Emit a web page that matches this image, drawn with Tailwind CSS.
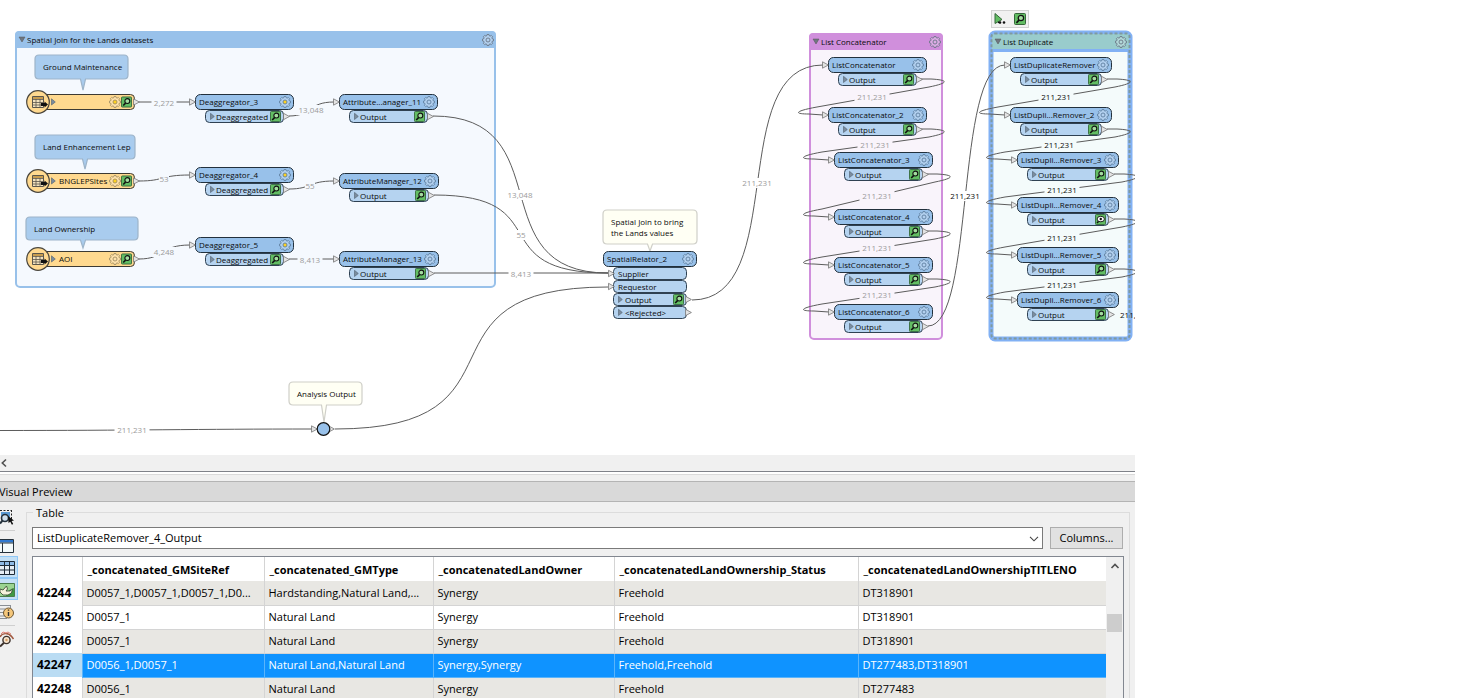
<!DOCTYPE html>
<html lang="en">
<head>
<meta charset="utf-8">
<title>Workspace – Visual Preview</title>
<script src="https://cdn.jsdelivr.net/npm/@tailwindcss/browser@4"></script>
</head>
<body class="bg-white text-black font-['Open_Sans','Noto_Sans',sans-serif]">
<div class="flex h-screen w-full max-w-[1135px] flex-col overflow-hidden">

  <!-- Workflow canvas -->
  <main class="h-[455px] shrink-0 overflow-hidden">
    <svg id="canvas" class="block h-[455px] w-[1135px]" viewBox="0 0 1135 455" role="img" aria-label="Workflow canvas">
      <defs>
        <symbol id="gear" viewBox="-7 -7 14 14">
          <path d="M-1.1-5.8h2.2l.4 1.5 1.1.5 1.4-.9 1.6 1.6-.9 1.4.5 1.1 1.5.4v2.2l-1.5.4-.5 1.1.9 1.4-1.6 1.6-1.4-.9-1.1.5-.4 1.5h-2.2l-.4-1.5-1.1-.5-1.4.9-1.6-1.6.9-1.4-.5-1.1-1.5-.4v-2.2l1.5-.4.5-1.1-.9-1.4 1.6-1.6 1.4.9 1.1-.5z" transform="scale(.82) translate(0 -.9)" fill="#ffffff" fill-opacity=".25" stroke="currentColor" stroke-width="1.100"/>
          <circle r="2" fill="var(--hub,none)" stroke="currentColor" stroke-width=".9"/>
        </symbol>
        <symbol id="mag" viewBox="0 0 12 12">
          <rect x=".5" y=".5" width="11" height="11" rx="1" fill="#62bd63" stroke="#35663a"/>
          <path d="M5 7.2 2.4 9.8" stroke="#111" stroke-width="1.7"/>
          <circle cx="6.9" cy="5" r="2.7" fill="#a4dda0" stroke="#111" stroke-width="1.2"/>
        </symbol>
        <symbol id="eye" viewBox="0 0 12 12">
          <rect x=".5" y=".5" width="11" height="11" rx="1" fill="#62bd63" stroke="#35663a"/>
          <path d="M4 7.8 2.2 9.8" stroke="#111" stroke-width="1.6"/>
          <ellipse cx="6.3" cy="5.5" rx="4" ry="3" fill="#fff" stroke="#111"/>
          <circle cx="6.3" cy="5.5" r="1.3" fill="#111"/>
        </symbol>
        <symbol id="tri" viewBox="0 0 7 8"><path d="M.5.8v6.4L6.4 4z" fill="#e3e3e3" stroke="#777" stroke-width=".8"/></symbol>
        <symbol id="exp" viewBox="0 0 5 8"><path d="M.5.8v6.2L4.3 4z" fill="#7b8c9e" stroke="#4f5f70" stroke-width=".6"/></symbol>
      </defs>
    </svg>
  </main>

  <!-- Horizontal scroll bar -->
  <div class="flex h-[16px] shrink-0 items-center bg-[#f0f0f0]">
    <button type="button" aria-label="Scroll left" class="flex h-4 w-4 items-center"><svg viewBox="0 0 10 10" class="h-[10px] w-[10px]"><path d="M6 1.500 2.300 5 6 8.500" fill="none" stroke="#505050" stroke-width="1.600"/></svg></button>
  </div>
  <div class="h-[3px] shrink-0 border-t border-[#7f8289] bg-white"></div>
  <div class="h-[7px] shrink-0 border-t border-[#dadada] bg-[#f0f0f0]"></div>

  <!-- Visual preview -->
  <h2 class="flex h-[21px] shrink-0 items-center border-y border-[#b4b4b4] bg-[#d9d9d9] pt-[2px] text-[11px]"><span class="-ml-px">Visual Preview</span></h2>

  <section class="flex min-h-0 grow bg-[#f0f0f0]">
    <nav class="flex w-[26px] shrink-0 flex-col" aria-label="Preview tools">
      <button type="button" aria-label="Select and zoom" class="mt-[6px] h-[20px] w-[15px]">
        <svg viewBox="0 0 15 20" class="h-[20px] w-[15px]"><path d="M0 2.500h12M11.500 2v10" fill="none" stroke="#222" stroke-width="1" stroke-dasharray="2 1.500"/><path d="M1 4h9v8H1z" fill="#5b9bd5"/><circle cx="5" cy="10" r="3.500" fill="#cfe0ee" stroke="#24313c" stroke-width="1.600"/><path d="M2.500 12.500 0 15.500" stroke="#24313c" stroke-width="2"/><path d="m8 8 6 4.500-2.400.6 1.600 3-1.300.7-1.600-3L8.500 15z" fill="#111"/></svg>
      </button>
      <div class="mt-[2px] h-px w-[15px] bg-[#cfcfcf]"></div>
      <button type="button" aria-label="Side panel" class="mt-[7px] h-[17px] w-[15px]">
        <svg viewBox="0 0 15 17" class="h-[17px] w-[15px]"><path d="M-1 1.500h14.500v13H-1z" fill="#f4fafb" stroke="#26323c"/><path d="M0 2h13v2.500H0z" fill="#2f78d0"/><path d="M0 5h13M2.500 5v9" stroke="#26323c"/></svg>
      </button>
      <button type="button" aria-label="Table view" class="mt-[1px] h-[22px] w-[18px] border border-l-0 border-[#90c8f6] bg-[#c4e0f5]">
        <svg viewBox="0 0 17 20" class="h-[20px] w-[17px]"><path d="M-1 4.500h15.500v13H-1z" fill="#e6eef4" stroke="#1d2a36"/><path d="M0 5h14v3H0z" fill="#8ebbe6"/><path d="M0 8.500h14M0 13h14M4.500 5v12M9.500 5v12" stroke="#1d2a36"/></svg>
      </button>
      <button type="button" aria-label="Graphics view" class="h-[22px] w-[18px] border border-l-0 border-[#90c8f6] bg-[#c4e0f5]">
        <svg viewBox="0 0 17 20" class="h-[20px] w-[17px]"><path d="M-1 4.500h15.500v13H-1z" fill="#9bd592" stroke="#4a7d4a"/><path d="M6 17c0-4 4-7 8-8v8z" fill="#3f9a43"/><path d="M0 10l3 1 3.500-4 1 3-1.500 2h4l2.500-2-1 4-3.500 2H3L0 13z" fill="#f6f2dc" stroke="#40523a" stroke-width=".9"/></svg>
      </button>
      <button type="button" aria-label="Feature information" class="mt-[2px] h-[20px] w-[15px]">
        <svg viewBox="0 0 15 20" class="h-[20px] w-[15px]"><path d="M0 3.500h11M0 7h5M0 10.500h4M0 14h5M0 16.500h7M10.500 3v3" stroke="#8a8f94"/><circle cx="8.500" cy="11" r="5" fill="#f5c77b" stroke="#6b5633"/><path d="M8.500 10v4M8.500 7.500v1.300" stroke="#333" stroke-width="1.400"/></svg>
      </button>
      <div class="mt-[3px] h-px w-[15px] bg-[#cfcfcf]"></div>
      <button type="button" aria-label="Inspect" class="mt-[4px] h-[20px] w-[15px]">
        <svg viewBox="0 0 15 20" class="h-[20px] w-[15px]"><path d="M0 7c2-4 8-5 12 0l1.500 2" fill="none" stroke="#a0583f" stroke-width="1.500"/><path d="M1 4 3 2l3 1 2-1 3 2" fill="none" stroke="#e0857a"/><circle cx="6.500" cy="10" r="3.600" fill="#f6e3cc" stroke="#3d322c" stroke-width="1.400"/><circle cx="6.500" cy="10" r="1.200" fill="#d9a066"/><path d="M4 12.800 0 16.500" stroke="#3d322c" stroke-width="2"/></svg>
      </button>
    </nav>

    <fieldset class="relative mt-[10px] mr-[5px] flex min-w-0 grow flex-col border border-b-0 border-[#dcdcdc] px-[5px] pt-[14px]">
      <legend class="absolute -top-[10px] left-[6px] bg-[#f0f0f0] px-[3px] text-[11px] leading-[20px]">Table</legend>
      <div class="flex gap-[7px] pr-px">
        <div class="relative grow">
          <select aria-label="Table" class="block h-[22px] w-full appearance-none border border-[#7a7a7a] bg-white px-[4px] text-[11px] leading-[20px]"><option>ListDuplicateRemover_4_Output</option></select>
          <svg viewBox="0 0 10 6" class="pointer-events-none absolute top-[9px] right-[4px] h-[6px] w-[10px]"><path d="m1 .8 4 4 4-4" fill="none" stroke="#444" stroke-width="1.100"/></svg>
        </div>
        <button type="button" class="h-[22px] w-[73px] border border-[#adadad] bg-[#e1e1e1] text-[11px] leading-[20px]">Columns...</button>
      </div>
      <div class="mt-[7px] flex min-h-0 grow overflow-hidden border border-b-0 border-[#828790] bg-white">
        <div class="min-w-0 grow overflow-hidden">
        <table class="w-full table-fixed border-collapse text-left text-[11px] leading-[20px]">
          <colgroup><col class="w-[49px]"><col class="w-[182px]"><col class="w-[169px]"><col class="w-[181px]"><col class="w-[244px]"><col></colgroup>
          <thead>
            <tr class="h-[24px] font-bold">
              <th></th>
              <th class="border-l border-[#d4d4d4] px-[5px] pt-px">_concatenated_GMSiteRef</th>
              <th class="border-l border-[#d4d4d4] px-[5px] pt-px">_concatenated_GMType</th>
              <th class="border-l border-[#d4d4d4] px-[5px] pt-px">_concatenatedLandOwner</th>
              <th class="border-l border-[#d4d4d4] px-[5px] pt-px">_concatenatedLandOwnership_Status</th>
              <th class="border-l border-[#d4d4d4] px-[5px] pt-px">_concatenatedLandOwnershipTITLENO</th>
            </tr>
          </thead>
          <tbody id="rows"></tbody>
        </table>
        </div>
        <div class="flex w-[17px] shrink-0 flex-col items-center bg-[#f0f0f0]">
          <button type="button" aria-label="Scroll up" class="flex h-[18px] w-full items-center justify-center"><svg viewBox="0 0 10 6" class="h-[6px] w-[10px]"><path d="m1.500 5 3.500-3.500L8.500 5" fill="none" stroke="#505050" stroke-width="1.600"/></svg></button>
          <div class="mt-[39px] h-[18px] w-[15px] bg-[#cdcdcd]"></div>
        </div>
      </div>
    </fieldset>
  </section>
</div>

<script>
const rows = [
  ['42244','D0057_1,D0057_1,D0057_1,D0...','Hardstanding,Natural Land,...','Synergy','Freehold','DT318901'],
  ['42245','D0057_1','Natural Land','Synergy','Freehold','DT318901'],
  ['42246','D0057_1','Natural Land','Synergy','Freehold','DT318901'],
  ['42247','D0056_1,D0057_1','Natural Land,Natural Land','Synergy,Synergy','Freehold,Freehold','DT277483,DT318901'],
  ['42248','D0056_1','Natural Land','Synergy','Freehold','DT277483'],
];
document.getElementById('rows').innerHTML = rows.map((r, i) => {
  const sel = i === 3;
  const cell = sel ? 'bg-[#0f93ff] text-white border-[#5ab4fb]' : (i % 2 ? 'bg-white border-[#d4d4d4]' : 'bg-[#e8e7e3] border-[#d4d4d4]');
  return `<tr class="h-[24px]"><th class="px-[4px] text-[12px] font-bold ${sel ? 'bg-[#badcf3]' : 'bg-white'}">${r[0]}</th>` +
    r.slice(1).map(c => `<td class="truncate border-l border-b px-[4px] ${cell}">${c}</td>`).join('') + '</tr>';
}).join('');

const BLUE = '#98c1ea', PORT = '#b5d3f0', EDGE = '#5c5c5c';
const out = [];
const esc = s => s.replace(/</g, '&lt;').replace(/>/g, '&gt;');
const text = (x, y, s, size, fill = '#0b0b0b', anchor = 'start') =>
  out.push(`<text x="${x}" y="${y}" font-size="${size}" fill="${fill}" text-anchor="${anchor}">${esc(s)}</text>`);
const use = (id, x, y, w, h, extra = '') => out.push(`<use href="#${id}" x="${x}" y="${y}" width="${w}" height="${h}" ${extra}/>`);
const rect = (x, y, w, h, rx, fill, stroke, sw = 1) =>
  out.push(`<rect x="${x}" y="${y}" width="${w}" height="${h}" rx="${rx}" fill="${fill}" stroke="${stroke}" stroke-width="${sw}"/>`);
const line = d => out.push(`<path d="${d}" fill="none" stroke="${EDGE}" stroke-width="1"/>`);
const gear = (x, y, hub, color = '#5f7f9f') => use('gear', x - 7, y - 7, 14, 14, `style="color:${color};--hub:${hub || 'none'}"`);
const count = (x, y, s, bg, fill = '#9b9b9b') => {
  const w = s.length * 5;
  rect(x - w / 2, y - 5, w, 10, 0, bg, 'none');
  text(x, y + 3, s, 8, fill, 'middle');
};
function group(x, y, w, h, color, fill, title, head = 17) {
  rect(x + 1, y + 1, w - 2, h - 2, 4, fill, color, 2);
  out.push(`<path d="M${x} ${y + head}V${y + 4}q0-4 4-4h${w - 8}q4 0 4 4v${head - 4}z" fill="${color}"/>`);
  out.push(`<path d="M${x + 4} ${y + 6}h6l-3 5z" fill="#6f7680" stroke="#555" stroke-width=".5"/>`);
  text(x + 12, y + 12, title, 8);
  gear(x + w - 8, y + 9, null, '#6a7686');
}
function port(x, y, w, name, icon, arrow = true, h = 12) {
  rect(x + .5, y + .5, w, h, 4, PORT, '#2f4152');
  use('exp', x + 5, y + 2.5, 5, 8);
  text(x + 11, y + 9.5, name, 8);
  if (icon) use(icon, x + w - 13, y + 1, 11, 11);
  if (arrow) use('tri', x + w, y + 2, 7, 9);
}
function node(x, y, w, name, px, pw, pname, opt = {}) {
  port(px, y + 16, pw, pname, opt.icon || 'mag');
  rect(x + .5, y + .5, w, 15, 5, BLUE, '#22303c');
  use('tri', x - 6, y + 4, 7, 8);
  gear(x + w - 8, y + 8, opt.hub);
  text(x + 4, y + 11, name, 8);
}
function reader(y, name, hub) {
  rect(38.5, y + .5, 96, 15, 4, '#ffd98f', '#3d3a33');
  out.push(`<circle cx="38" cy="${y + 8}" r="11.300" fill="#ffd98f" stroke="#4a463d" stroke-width="1.200"/>`);
  out.push(`<g transform="translate(32 ${y + 2})"><path d="M.5.5h11v11H.5z" fill="#f3e3bf" stroke="#5a564c"/><path d="M1 1h10v2H1z" fill="#c79c4f"/><path d="M.5 3.500h11M.5 6.500h11M.5 9h11M4 3v8.500M8 3v8.500" stroke="#5a564c" stroke-width=".8"/><path d="M9 7h3.500V5.500L16 8.500l-3.500 3V10H9z" fill="#111"/></g>`);
  use('exp', 51, y + 4, 5, 8);
  text(59, y + 11, name, 8);
  gear(115, y + 8, hub, '#a08d63');
  use('mag', 121, y + 2, 11, 12);
  use('tri', 133, y + 4, 7, 8);
}
function note(x, y, w, h, tx, ty, lines, fill, stroke) {
  const b = y + h;
  out.push(`<path d="M${x + 4} ${y}h${w - 8}q4 0 4 4v${h - 8}q0 4-4 4H${tx + 2.5}L${tx} ${ty}L${tx - 2.5} ${b}H${x + 4}q-4 0-4-4v${8 - h}q0-4 4-4z" fill="${fill}" stroke="${stroke}" stroke-width="1.200"/>`);
  lines.forEach((l, i) => text(x + 8, y + 15 + i * 11, l, 8));
}
// Wraps from an output port back round to the next transformer's input
function loop(x1, y1, x2, y2, right, left) {
  line(`M${x1} ${y1}H${right - 14}C${right + 4} ${y1 + 1} ${right + 4} ${y1 + 4} ${right - 16} ${y1 + 8}L${left + 18} ${y2 - 8}C${left - 4} ${y2 - 4} ${left - 6} ${y2 - 1} ${left + 10} ${y2 - 1}L${x2} ${y2}`);
}

// Groups
const G1 = '#f5f9fe', G2 = '#f9f4fb', G3 = '#f4fbfb';
group(15, 31, 481, 257, BLUE, G1, 'Spatial Join for the Lands datasets');
group(809, 33, 134, 307, '#d08fdc', G2, 'List Concatenator');
rect(991, 33, 139, 306, 4, G3, '#82b1f4', 5);
out.push('<path d="M992 50V36q0-2 2-2h133q2 0 2 2v14z" fill="#99cccc"/><path d="M991 50.500h139" stroke="#82b1f4" stroke-width="3"/>');
out.push('<rect x="991.500" y="33.500" width="138" height="305" rx="3" fill="none" stroke="#7f9aa0" stroke-width="2" stroke-dasharray="3 2"/>');
out.push('<path d="M995 39h6l-3 5z" fill="#6f7680" stroke="#555" stroke-width=".5"/>');
text(1003, 45, 'List Duplicate', 8);
gear(1121, 42, null, '#6a7686');

// Connections
line('M139 102H190'); line('M139 181C165 181 160 175 190 175'); line('M139 259C165 259 160 245 190 245');
line('M289 116C312 116 308 102 334 102'); line('M289 189C312 189 308 181 334 181'); line('M289 259H334');
line('M433 116C563 116 478 273 608 273'); line('M434 195C560 195 480 273 608 273'); line('M434 273H608');
line('M0 430.500C130 430.500 200 429 313 429'); line('M335 429C540 429 403 287 608 287');
line('M692 300C790 300 725 65 823 65'); line('M928 326C975 326 955 65 1005 65');
const concat = [[828, 57], [828, 107], [834, 152], [834, 209], [834, 257], [834, 304]];
const dup = [[1010, 57], [1010, 107], [1017, 152], [1017, 197], [1017, 247], [1017, 292]];
concat.slice(0, 5).forEach(([x, y], i) => loop(x + 93, y + 22, concat[i + 1][0] - 5, concat[i + 1][1] + 8, x + 117, (i === 0 ? 799 : 804)));
dup.slice(0, 5).forEach(([x, y], i) => loop(x + 97, y + 22, dup[i + 1][0] - 5, dup[i + 1][1] + 8, x + 121, (i === 0 ? 980 : 987)));

count(164, 103, '2,272', G1); count(164, 179, '53', G1); count(164, 252, '4,248', G1);
count(311, 110, '13,048', G1); count(310, 186, '55', G1); count(310, 260, '8,413', G1);
count(520, 195, '13,048', '#fff'); count(521, 235, '55', '#fff'); count(521, 274, '8,413', '#fff');
count(132, 430, '211,231', '#fff'); count(757, 183, '211,231', '#fff'); count(965, 196, '211,231', '#fff', '#0b0b0b');
[[872, 97], [875, 145], [877, 196], [877, 248], [877, 295]].forEach(([x, y]) => count(x, y, '211,231', G2));
[[1056, 97], [1059, 145], [1062, 190], [1062, 238], [1062, 285]].forEach(([x, y]) => count(x, y, '211,231', G3, '#0b0b0b'));
text(1120, 318, '211,231', 8);

// Annotations
const NB = '#a9ccee', NS = '#9db4c9', NY = '#fffff4', NG = '#cfcfc8';
note(35, 55, 93, 24, 83, 90, ['Ground Maintenance'], NB, NS);
note(35, 135, 100, 24, 85, 169, ['Land Enhancement Lep'], NB, NS);
note(26, 217, 112, 23, 83, 248, ['Land Ownership'], NB, NS);
note(603, 210, 94, 34, 650, 251, ['Spatial Join to bring', 'the Lands values'], NY, NG);
note(289, 382, 73, 23, 324, 422, ['Analysis Output'], NY, NG);

// Readers and transformers
reader(94, '', '#ffd21f'); reader(173, 'BNGLEPSItes', '#ffd21f'); reader(251, 'AOI', null);
[94, 167, 237].forEach((y, i) => node(195, y, 98, 'Deaggregator_' + (i + 3), 205, 78, 'Deaggregated', { hub: '#ffd21f' }));
node(339, 94, 98, 'Attribute...anager_11', 349, 78, 'Output');
node(339, 173, 99, 'AttributeManager_12', 349, 79, 'Output');
node(339, 251, 99, 'AttributeManager_13', 349, 79, 'Output');
[['Supplier', 0], ['Requestor', 0], ['Output', 1], ['<Rejected>', 1]].forEach(([n, o], i) => {
  const y = 267 + i * 13;
  rect(613.5, y + .5, 73, 12, 4, PORT, '#2f4152');
  text(o ? 625 : 618, y + 9.5, n, 8);
  if (o) { use('exp', 618, y + 2.5, 5, 8); use('tri', 685, y + 2, 7, 9); } else use('tri', 608, y + 2, 7, 9);
  if (i === 2) use('mag', 673, y + 1, 11, 11);
});
rect(603.5, 251.5, 93, 15, 5, BLUE, '#22303c'); text(607, 262, 'SpatialRelator_2', 8); gear(688, 259);
concat.forEach(([x, y], i) => node(x, y, 98, 'ListConcatenator' + (i ? '_' + (i + 1) : ''), x + 10, 78, 'Output'));
dup.forEach(([x, y], i) => node(x, y, 101, i ? 'ListDupli...Remover_' + (i + 1) : 'ListDuplicateRemover', x + 10, 81, 'Output', { icon: i === 3 ? 'eye' : 'mag' }));

// Junction
use('tri', 311, 425, 7, 8); use('tri', 328, 425, 7, 8);
out.push(`<circle cx="323.500" cy="429" r="6.300" fill="${BLUE}" stroke="#111" stroke-width="1.200"/>`);

// Selection toolbar
rect(991.5, 10.5, 37, 17, 0, '#f1f1f1', '#d2d2d2');
out.push('<path d="M995 13.500v10l7-4z" fill="#62bd63" stroke="#35663a"/><path d="M998 22.500h3" stroke="#111" stroke-width="1.200"/><circle cx="1000" cy="22.500" r="1.300" fill="#111"/><circle cx="1004" cy="22.500" r="1.300" fill="#111"/>');
use('mag', 1014, 13, 12, 12);

document.getElementById('canvas').insertAdjacentHTML('beforeend', out.join(''));
</script>
</body>
</html>
